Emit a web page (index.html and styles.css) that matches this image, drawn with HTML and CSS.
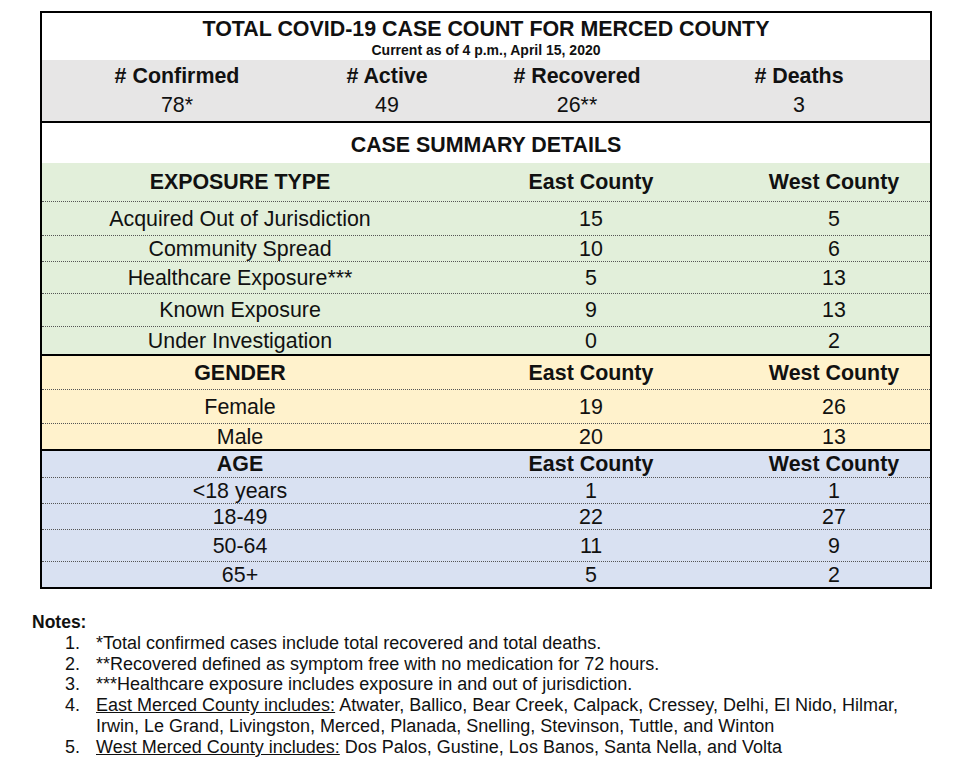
FILE: index.html
```html
<!DOCTYPE html>
<html lang="en">
  <head>
    <meta charset="UTF-8" />
    <meta name="viewport" content="width=device-width, initial-scale=1.0" />
    <title>Merced County COVID-19 Case Count</title>
    <link rel="stylesheet" href="styles.css">
  </head>

  <body>
    <main>
      <div class="sheet">
        <div class="title-block">
          <h1>TOTAL COVID-19 CASE COUNT FOR MERCED COUNTY</h1>
          <p class="asof">Current as of 4 p.m., April 15, 2020</p>
        </div>

        <div class="totals">
          <div class="totals-row heads">
            <span># Confirmed</span>
            <span># Active</span>
            <span># Recovered</span>
            <span># Deaths</span>
          </div>
          <div class="totals-row">
            <span>78*</span>
            <span>49</span>
            <span>26**</span>
            <span>3</span>
          </div>
        </div>

        <div class="summary-title">CASE SUMMARY DETAILS</div>

        <!-- exposure -->
        <div class="section green">
          <div class="row head h38"><span>EXPOSURE TYPE</span><span>East County</span><span>West County</span></div>
          <div class="row h34"><span>Acquired Out of Jurisdiction</span><span>15</span><span>5</span></div>
          <div class="row"><span>Community Spread</span><span>10</span><span>6</span></div>
          <div class="row h32"><span>Healthcare Exposure***</span><span>5</span><span>13</span></div>
          <div class="row h33"><span>Known Exposure</span><span>9</span><span>13</span></div>
          <div class="row h28"><span>Under Investigation</span><span>0</span><span>2</span></div>
        </div>

        <!-- gender -->
        <div class="section yellow">
          <div class="row head h33"><span>GENDER</span><span>East County</span><span>West County</span></div>
          <div class="row h34"><span>Female</span><span>19</span><span>26</span></div>
          <div class="row"><span>Male</span><span>20</span><span>13</span></div>
        </div>

        <!-- age -->
        <div class="section blue">
          <div class="row head"><span>AGE</span><span>East County</span><span>West County</span></div>
          <div class="row"><span>&lt;18 years</span><span>1</span><span>1</span></div>
          <div class="row"><span>18-49</span><span>22</span><span>27</span></div>
          <div class="row h32"><span>50-64</span><span>11</span><span>9</span></div>
          <div class="row"><span>65+</span><span>5</span><span>2</span></div>
        </div>
      </div>

      <div class="notes">
        <h3>Notes:</h3>
        <ol>
          <li><span class="num">1.</span><span>*Total confirmed cases include total recovered and total deaths.</span></li>
          <li><span class="num">2.</span><span>**Recovered defined as symptom free with no medication for 72 hours.</span></li>
          <li><span class="num">3.</span><span>***Healthcare exposure includes exposure in and out of jurisdiction.</span></li>
          <li><span class="num">4.</span><span><u>East Merced County includes:</u> Atwater, Ballico, Bear Creek, Calpack, Cressey, Delhi, El Nido, Hilmar, Irwin, Le Grand, Livingston, Merced, Planada, Snelling, Stevinson, Tuttle, and Winton</span></li>
          <li><span class="num">5.</span><span><u>West Merced County includes:</u> Dos Palos, Gustine, Los Banos, Santa Nella, and Volta</span></li>
        </ol>
      </div>
    </main>
  </body>
</html>
```

FILE: styles.css
```css
* {
  margin: 0;
  padding: 0;
  box-sizing: border-box;
}

body {
  background-color: #fff;
  color: #111;
  font-family: "Liberation Sans", Arial, sans-serif;
}

main {
  padding: 11px 0 0 40px;
}

.sheet {
  width: 892px;
  border: 2px solid #000;
  font-size: 21.4px;
  line-height: 24px;
  text-align: center;
}

/* title */
.title-block {
  padding: 4px 0 2px;
}

.title-block h1 {
  font-size: 21.4px;
  line-height: 24px;
  font-weight: 700;
}

.asof {
  margin-top: 1px;
  font-size: 14px;
  line-height: 16px;
  font-weight: 700;
}

/* totals band */
.totals {
  background-color: #e7e6e6;
  padding: 4px 0;
  border-bottom: 2px solid #000;
}

.totals-row {
  display: grid;
  grid-template-columns: 270px 150px 230px 214px;
}

.totals-row.heads {
  font-weight: 700;
  margin-bottom: 5px;
}

.summary-title {
  height: 40px;
  padding-top: 10px;
  font-weight: 700;
}

/* detail sections */
.section {
  border-bottom: 2px solid #000;
}

.section.blue {
  border-bottom: none;
}

.green {
  background-color: #e2efda;
}

.yellow {
  background-color: #fff2cc;
}

.blue {
  background-color: #d9e1f2;
}

.row {
  display: grid;
  grid-template-columns: 396px 306px 180px;
  align-items: center;
  height: 26px;
}

.row + .row {
  border-top: 1px dotted #555;
}

.row.head {
  font-weight: 700;
}

.h28 { height: 28px; }
.h32 { height: 32px; }
.h33 { height: 33px; }
.h34 { height: 34px; }
.h38 { height: 38px; }

/* notes */
.notes {
  margin: 23px 0 0 -8px;
  font-size: 18px;
  line-height: 20.8px;
}

.notes h3 {
  font-size: 17.5px;
  font-weight: 700;
}

.notes ol {
  list-style: none;
  padding-left: 33px;
  width: 896px;
}

.notes li {
  display: flex;
}

.num {
  flex: 0 0 31px;
}
```
